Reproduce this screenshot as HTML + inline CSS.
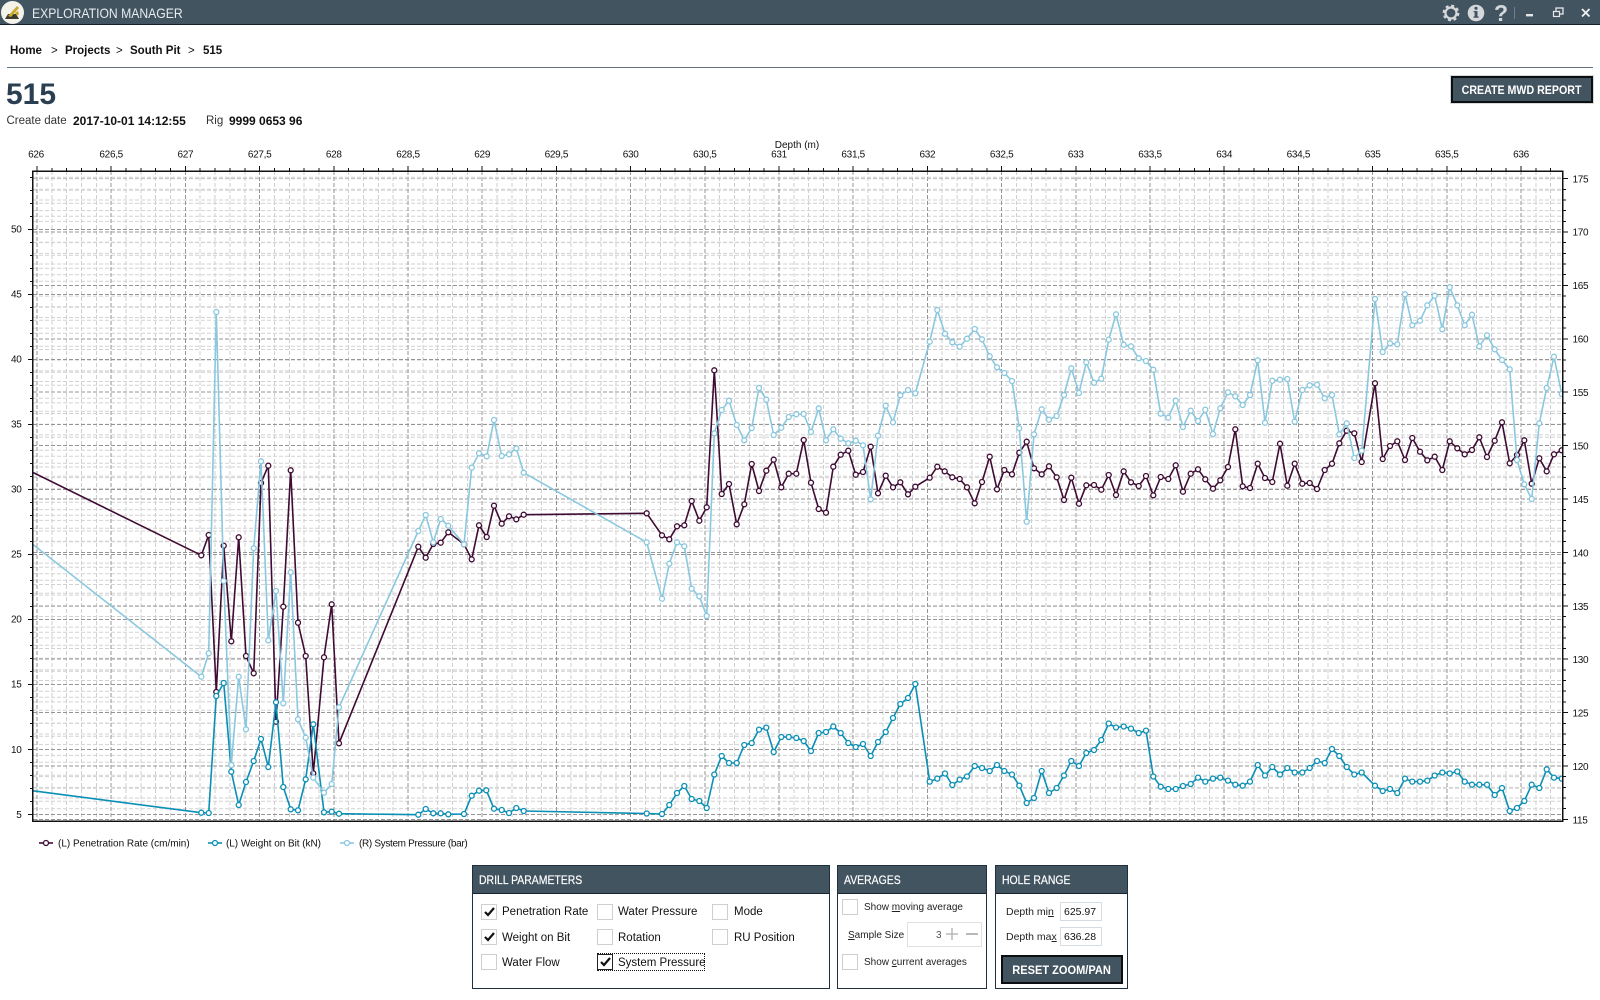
<!DOCTYPE html>
<html><head><meta charset="utf-8"><title>Exploration Manager</title>
<style>
html,body{margin:0;padding:0;background:#fff}
body{width:1600px;height:1000px;overflow:hidden;position:relative;font-family:"Liberation Sans",sans-serif;color:#111}
.t{position:absolute;white-space:nowrap}
.b{font-weight:bold}
.hdr{position:absolute;left:0;top:0;width:1600px;height:24px;background:#435461;border-bottom:1px solid #14232e}
.panel{position:absolute;top:865px;height:122px;border:1px solid #1c3040;background:#fff;box-sizing:content-box}
.ph{position:absolute;left:0;top:0;right:0;height:27px;background:#435461;border-bottom:1px solid #14232e;color:#fff;font-size:12px;line-height:29px;padding-left:6px;-webkit-text-stroke:.2px #fff}
.ph span{display:inline-block;transform:scaleX(.87);transform-origin:left center}
.cb{position:absolute;width:14px;height:14px;border:1px solid #cfcfcf;background:#fff}
.cb svg{position:absolute;left:1px;top:1px}
.lbl{position:absolute;white-space:nowrap;font-size:11.5px;line-height:16px;color:#111}
.sm{position:absolute;white-space:nowrap;font-size:10px;line-height:14px;color:#222}
.inp{position:absolute;border:1px solid #d5dce2;background:#fff;font-size:10.5px;line-height:16px;padding-left:3px;box-sizing:border-box;color:#111}
.btn{position:absolute;background:#435461;border:2px solid #0b0f12;color:#fff;font-weight:bold;font-size:12px;text-align:center;box-sizing:border-box;outline:1px solid #d8d8d8}
.btn span{display:inline-block}
svg text{font-family:"Liberation Sans",sans-serif;font-size:10px;letter-spacing:-.3px;fill:#111}
</style></head><body>

<div class="hdr"></div>
<svg style="position:absolute;left:0;top:0" width="26" height="25">
<circle cx="12.5" cy="12.5" r="11.5" fill="#f4f3ea"/>
<path d="M5 19l3-5h8l3 5z" fill="#3a3a30"/>
<path d="M8 16L17 6l2 2-8 9z" fill="#c9a92c"/>
<path d="M15 13l3-2 1 3-2 2z" fill="#c9a92c"/>
</svg>
<div class="t" style="left:32px;top:5px;font-size:14px;line-height:17px;color:#e6ebee;transform:scaleX(.87);transform-origin:left center">EXPLORATION MANAGER</div>

<svg style="position:absolute;left:1430px;top:0" width="170" height="25">
<circle cx="21" cy="13" r="5.5" fill="none" stroke="#d4d8da" stroke-width="2.2"/>
<circle cx="21" cy="13" r="7.300" fill="none" stroke="#d4d8da" stroke-width="2.200" stroke-dasharray="3 2.730"/>
<circle cx="46" cy="13" r="8.300" fill="#d4d8da"/>
<rect x="44.600" y="11" width="2.900" height="6.500" fill="#435461"/><rect x="43.600" y="16.400" width="5" height="1.400" fill="#435461"/><rect x="43.600" y="11" width="3" height="1.200" fill="#435461"/>
<circle cx="46" cy="8.300" r="1.600" fill="#435461"/>
<rect x="84" y="7" width="1" height="12" fill="#6f7f8a"/>
<rect x="96" y="14" width="7" height="2.400" fill="#e4e8ea"/>
<rect x="126" y="8" width="7" height="6" fill="none" stroke="#e4e8ea" stroke-width="1.300"/>
<rect x="123.500" y="11.500" width="6" height="5" fill="#435461" stroke="#e4e8ea" stroke-width="1.200"/>
<path d="M152 9l7.500 7.500M159.500 9l-7.500 7.500" stroke="#eef1f2" stroke-width="1.800"/>
</svg>
<div class="t b" style="left:1494px;top:0;font-size:23px;line-height:27px;color:#d4d8da">?</div>

<div class="t b" style="left:10px;top:44px;font-size:11.5px;line-height:14px">Home</div>
<div class="t" style="left:51px;top:44px;font-size:11.5px;line-height:14px">&gt;</div>
<div class="t b" style="left:65px;top:44px;font-size:11.5px;line-height:14px">Projects</div>
<div class="t" style="left:116px;top:44px;font-size:11.5px;line-height:14px">&gt;</div>
<div class="t b" style="left:130px;top:44px;font-size:11.5px;line-height:14px">South Pit</div>
<div class="t" style="left:188px;top:44px;font-size:11.5px;line-height:14px">&gt;</div>
<div class="t b" style="left:203px;top:44px;font-size:11.5px;line-height:14px">515</div>
<div style="position:absolute;left:7px;top:67px;width:1586px;height:1px;background:#66767f"></div>

<div class="t b" style="left:6px;top:78px;font-size:30px;line-height:34px;color:#2b3f52">515</div>
<div class="t" style="left:6.500px;top:114px;font-size:11.500px;line-height:14px;color:#333">Create date</div>
<div class="t b" style="left:73px;top:114px;font-size:12px;line-height:14px">2017-10-01 14:12:55</div>
<div class="t" style="left:206px;top:114px;font-size:11.500px;line-height:14px;color:#333">Rig</div>
<div class="t b" style="left:229px;top:114px;font-size:12px;line-height:14px">9999 0653 96</div>

<div class="btn" style="left:1451px;top:76px;width:142px;height:27px;line-height:25px"><span style="transform:scaleX(.887)">CREATE MWD REPORT</span></div>

<svg style="position:absolute;left:0;top:0" width="1600" height="860">
<defs>
<clipPath id="plot"><rect x="33" y="171" width="1530" height="650"/></clipPath>
<path id="vm" d="M14.84 171V821M29.68 171V821M44.52 171V821M59.36 171V821M89.04 171V821M103.880 171V821M118.720 171V821M133.560 171V821"/>
<path id="vM" d="M0 171V821M74.200 171V821"/>
<path id="tm" d="M14.84 168V171M29.68 168V171M44.52 168V171M59.36 168V171M89.04 168V171M103.880 168V171M118.720 168V171M133.560 168V171"/>
<path id="tM" d="M0 166V171M74.200 166V171"/>
<path id="hl" d="M33 -13H1563M33 -26H1563M33 -39H1563M33 -52H1563"/>
<path id="hr" d="M33 10.680H1563M33 21.360H1563M33 32.040H1563M33 42.720H1563"/>
<path id="tl" d="M30 -13H33M30 -26H33M30 -39H33M30 -52H33M28 0H33"/>
<path id="tr" d="M1563 10.680H1566M1563 21.360H1566M1563 32.040H1566M1563 42.720H1566M1563 0H1568"/>
<marker id="mP" markerUnits="userSpaceOnUse" markerWidth="8" markerHeight="8" refX="4" refY="4"><circle cx="4" cy="4" r="2.500" fill="#fff" stroke="#3f0b33" stroke-width="1.300"/></marker>
<marker id="mT" markerUnits="userSpaceOnUse" markerWidth="8" markerHeight="8" refX="4" refY="4"><circle cx="4" cy="4" r="2.500" fill="#fff" stroke="#0a8fb5" stroke-width="1.300"/></marker>
<marker id="mL" markerUnits="userSpaceOnUse" markerWidth="8" markerHeight="8" refX="4" refY="4"><circle cx="4" cy="4" r="2.500" fill="#fff" stroke="#8ac8df" stroke-width="1.300"/></marker>
</defs>

<g clip-path="url(#plot)" fill="none" stroke-width="1" stroke-dasharray="4 2">
<g stroke="#cfcfcf" shape-rendering="crispEdges">
<use href="#vm" x="37"/><use href="#vm" x="185.400"/><use href="#vm" x="333.800"/><use href="#vm" x="482.200"/><use href="#vm" x="630.600"/><use href="#vm" x="779"/><use href="#vm" x="927.400"/><use href="#vm" x="1075.800"/><use href="#vm" x="1224.200"/><use href="#vm" x="1372.600"/><use href="#vm" x="1521"/>
</g>
<g stroke="#d2d2d2">
<use href="#hl" y="814.300"/><use href="#hl" y="749.300"/><use href="#hl" y="684.300"/><use href="#hl" y="619.300"/><use href="#hl" y="554.300"/><use href="#hl" y="489.300"/><use href="#hl" y="424.300"/><use href="#hl" y="359.300"/><use href="#hl" y="294.300"/><use href="#hl" y="229.300"/>
<use href="#hr" y="178.600"/><use href="#hr" y="232"/><use href="#hr" y="285.400"/><use href="#hr" y="338.800"/><use href="#hr" y="392.200"/><use href="#hr" y="445.600"/><use href="#hr" y="499"/><use href="#hr" y="552.400"/><use href="#hr" y="605.800"/><use href="#hr" y="659.200"/><use href="#hr" y="712.600"/><use href="#hr" y="766"/>
</g>
<g stroke="#959595" shape-rendering="crispEdges">
<use href="#vM" x="37"/><use href="#vM" x="185.400"/><use href="#vM" x="333.800"/><use href="#vM" x="482.200"/><use href="#vM" x="630.600"/><use href="#vM" x="779"/><use href="#vM" x="927.400"/><use href="#vM" x="1075.800"/><use href="#vM" x="1224.200"/><use href="#vM" x="1372.600"/><use href="#vM" x="1521"/>
<path d="M33 814.300H1563M33 749.300H1563M33 684.300H1563M33 619.300H1563M33 554.300H1563M33 489.300H1563M33 424.300H1563M33 359.300H1563M33 294.300H1563M33 229.300H1563"/>
<path d="M33 232H1563M33 285.400H1563M33 338.800H1563M33 392.200H1563M33 445.600H1563M33 499H1563M33 552.400H1563M33 605.800H1563M33 659.200H1563M33 712.600H1563M33 766H1563M33 819.400H1563"/>
</g>
<path d="M33 178.600H1563" stroke="#bdbdbd"/>
</g>

<g shape-rendering="crispEdges" fill="none" stroke="#111" stroke-width="1">
<use href="#tm" x="37"/><use href="#tm" x="185.400"/><use href="#tm" x="333.800"/><use href="#tm" x="482.200"/><use href="#tm" x="630.600"/><use href="#tm" x="779"/><use href="#tm" x="927.400"/><use href="#tm" x="1075.800"/><use href="#tm" x="1224.200"/><use href="#tm" x="1372.600"/>
<path d="M1535.840 168V171M1550.680 168V171"/>
<use href="#tM" x="37"/><use href="#tM" x="185.400"/><use href="#tM" x="333.800"/><use href="#tM" x="482.200"/><use href="#tM" x="630.600"/><use href="#tM" x="779"/><use href="#tM" x="927.400"/><use href="#tM" x="1075.800"/><use href="#tM" x="1224.200"/><use href="#tM" x="1372.600"/>
<path d="M1521 166V171"/>
<use href="#tl" y="814.300"/><use href="#tl" y="749.300"/><use href="#tl" y="684.300"/><use href="#tl" y="619.300"/><use href="#tl" y="554.300"/><use href="#tl" y="489.300"/><use href="#tl" y="424.300"/><use href="#tl" y="359.300"/><use href="#tl" y="294.300"/><use href="#tl" y="229.300"/>
<use href="#tr" y="178.600"/><use href="#tr" y="232"/><use href="#tr" y="285.400"/><use href="#tr" y="338.800"/><use href="#tr" y="392.200"/><use href="#tr" y="445.600"/><use href="#tr" y="499"/><use href="#tr" y="552.400"/><use href="#tr" y="605.800"/><use href="#tr" y="659.200"/><use href="#tr" y="712.600"/><use href="#tr" y="766"/>
<path d="M1563 819.400H1568"/>
</g>

<g clip-path="url(#plot)" fill="none" stroke-width="1.600" stroke-linejoin="round">
<path d="M33 472.500L201.300 555.300" stroke="#3f0b33"/>
<path stroke="#3f0b33" marker-start="url(#mP)" marker-mid="url(#mP)" marker-end="url(#mP)" d="M201.300 555.300L208.700 535 216.300 692 223.700 545.700 231.300 641.300 238.700 537.300 246 656 253.700 673.300 261 483 268.300 465.700 276 721.700 283.300 606.700 290.700 470.300 298 622.700 305.700 656 313.300 773.300 324 657.300 331.700 604.300 339 743.300 418.300 546.700 425.700 557.700 433.300 544 440.700 542.700 448.300 532.300 464 544.300 471.700 559.300 479 525.300 486.700 537 494 505.700 501.700 523.700 509 516.300 516.300 519.300 523.700 514.700 646.700 513.300 662 535.300 669.300 539.300 677 526.300 684.300 525.300 691.700 501 699.300 520.700 706.700 507.300 714.300 370.300 721.700 494 729 484 736.700 524.300 744.300 504.300 751.700 464 759 491 766.300 470.700 773.700 459.700 781.300 487.300 788.700 473.700 796.300 473.700 803.700 440 811 482.700 818.700 509 826 512.700 833.300 466.700 840.700 454.700 848.300 450.700 855.700 474.700 863 472 870.700 446.700 878 493.300 885.700 475.700 893 487.300 900.300 482.300 908 494.300 915.300 486.700 929.700 477.700 937.300 466.700 944.700 471.300 952.300 477.300 959.700 479 967 487.300 974.700 503.300 982 482 989.700 456.700 997 489.300 1004.300 470 1012 474.300 1019.300 452.700 1026.700 441.700 1034 468.300 1041.700 474.300 1049 466.300 1056.700 477.300 1064 500 1071.300 477.700 1079 503.700 1086.300 485.300 1094 485 1101.300 489.700 1108.700 475 1116 495 1123.700 471.300 1131 482.300 1138.700 486 1146 476 1153.300 495.300 1160.700 477 1168.300 479 1175.700 465.300 1183 491.700 1190.700 473.700 1198 469.300 1205.300 479.300 1213 488.700 1220.300 480.300 1228 467 1235.300 429.300 1242.700 486.300 1250 488 1257.700 463.700 1265 478 1272.300 482 1280 443.700 1287.300 485.700 1294.700 463.700 1302.300 483.700 1309.700 483 1317 489 1324.700 470 1332 463.700 1339.300 443.300 1346.700 430.700 1354.300 433.300 1361.700 462 1375 383.300 1382.700 459 1390 446 1397.300 441.300 1405 460 1412.300 438 1420 451.700 1427.300 460.300 1434.700 456.700 1442.300 470 1449.700 441.300 1457.300 448.300 1464.700 454.300 1472 450 1479.300 437.300 1487 457 1494.700 440.700 1502 422.300 1509.700 463.300 1517 455 1524.300 440.300 1531.700 483.700 1539.300 458.300 1546.700 471.300 1554 454.300 1561.700 450.300"/>
<path d="M33 790.800L201.300 812.700" stroke="#0a8fb5"/>
<path stroke="#0a8fb5" marker-start="url(#mT)" marker-mid="url(#mT)" marker-end="url(#mT)" d="M201.300 812.700L208.700 813 216.300 696 223.700 683 231.300 771.700 238.700 805 246 782 253.700 761 261 739 268.300 767 276 702.300 283.300 787 290.700 809.300 298 810.300 305.700 779.300 313.300 724.300 324 812.300 331.700 811.700 339 813.700 418.300 814.700 425.700 809 433.300 813.300 440.700 813.300 448.300 814.300 464 814 471.700 795.700 479 790.700 486.300 790.300 494 808.700 501.700 810 509 813 516.300 808 523.700 811 646.700 813.500 662 814 669.300 805 677 793 684.300 786 691.700 799 699.300 801 706.700 808 714.300 774.500 721.700 756 729 763 736.700 763 744.300 745 751.700 743 759 729.600 766.300 727.600 773.700 752 781.300 737 788.700 737 796.300 738 803.700 741 811 751 818.700 733 826 732 833.300 726.500 840.700 733 848.300 743 855.700 747 863 744 870.700 756 878 742 885.700 732 893 718 900.300 704 908 698 915.300 684 929.700 781.600 937.300 778.600 945 773.500 952.300 785 959.700 779.600 967 776.500 974.700 766 982 768 989.700 771 997 765 1004.300 771 1012 774.500 1019.300 785.600 1026.700 803 1034 798 1041.700 771 1049 793 1056.700 788 1064 775.500 1071.300 761 1079 766 1086.300 753 1094 750 1101.300 740 1108.700 723.500 1116 727.500 1123.700 726.500 1131 728.600 1138.700 733 1146 730.600 1153.300 776.500 1160.700 786.700 1168.300 789 1175.700 789 1183 786 1190.700 784 1198 777.600 1205.300 781.600 1213 778.600 1220.300 777.600 1228 780.600 1235.300 784.700 1242.700 785.700 1250 781.600 1257.700 765 1265 775.500 1272.300 767 1280 774.500 1287.300 768 1294.700 772.500 1302.300 772.500 1309.700 768 1317 761 1324.700 763 1332 749 1339.300 756 1346.700 767 1354.300 774.500 1361.700 772.500 1375 785.700 1382.700 791 1390 789 1397.300 793 1405 778.600 1412.300 781.600 1420 781.600 1427.300 780.600 1434.700 775.500 1442.300 772.500 1449.700 773.500 1457.300 771.500 1464.700 781.600 1472 784.700 1479.300 784.700 1487 784.700 1494.700 795 1502 788 1509.700 811 1517 808 1524.300 801 1531.700 784.700 1539.300 788 1546.700 769.400 1554 777.600 1561.700 778.600"/>
<path d="M33 544.500L201.300 676.700" stroke="#8ac8df"/>
<path stroke="#8ac8df" marker-start="url(#mL)" marker-mid="url(#mL)" marker-end="url(#mL)" d="M201.300 676.700L208.700 653.300 216.300 312 223.700 581 231.300 765 238.700 676.700 246 729.300 253.700 548.300 261 461.300 268.300 640.300 276 591 283.300 703.300 290.700 572.300 298 719.300 305.700 737.700 313.300 777.700 324 792.700 331.700 784 339 707.300 418.300 531 425.700 515 433.300 542.300 440.700 519 448.300 525.700 464 544.300 471.700 467.700 479 453.300 486.700 456.300 494 420 501.700 456 509 454.300 516.300 448.300 523.700 472.700 646.700 542.300 662 598.700 669.300 563.700 677 542.300 684.300 546.300 691.700 588.700 699.300 596.300 706.700 616 714.300 433.300 721.700 410 729 400.700 736.700 425 744.300 440.300 751.700 428 759 388 766.300 399.700 773.700 435 781.300 427.700 788.700 417 796.300 414.300 803.700 414 811 432 818.700 408.300 826 440.300 833.300 429.300 840.700 438.700 848.300 443.300 855.700 440.700 863 445.300 870.700 499.300 878 435.700 885.700 405.700 893 422.300 900.300 395.300 908 390 915.300 393.300 929.700 341.700 937.300 310 945 333.700 952.300 342.300 959.700 346.700 967 338.700 974.700 329 982 339.300 989.700 356.300 997 367.300 1004.300 373 1012 381 1019.300 428.300 1026.700 521.700 1034 434.300 1041.700 409.300 1049 419.700 1056.700 416 1064 395 1071.300 368.300 1079 393 1086.300 362.300 1094 382.700 1101.300 378.700 1108.700 339.700 1116 314.300 1123.700 344.700 1131 346.300 1138.700 358.300 1146 361 1153.300 369.700 1160.700 413.700 1168.300 417.700 1175.700 400.700 1183 427 1190.700 410.700 1198 421 1205.300 409.700 1213 434 1220.300 408.300 1228 392.300 1235.300 396.300 1242.700 405 1250 395 1257.700 360.300 1265 422.700 1272.300 380.700 1280 379.700 1287.300 379 1294.700 421.700 1302.300 390 1309.700 385.300 1317 384.700 1324.700 398.300 1332 395 1339.300 434.300 1346.700 423.300 1354.300 458 1361.700 450.700 1375 299 1382.700 352 1390 343.300 1397.300 344.300 1405 294.300 1412.300 325.300 1420 320.700 1427.300 305.300 1434.700 295.700 1442.300 329.300 1449.700 287.300 1457.300 305.300 1464.700 325.300 1472 314.700 1479.300 346.300 1487 335.300 1494.700 349.300 1502 360 1509.700 369.300 1517 460 1524.300 484.300 1531.700 499 1539.300 423.300 1546.700 388 1554 356.700 1561.700 394"/>
</g>

<rect x="32.750" y="171.250" width="1530" height="650" fill="none" stroke="#111" stroke-width="1.500"/>

<g text-anchor="middle">
<text x="797" y="148" style="letter-spacing:0">Depth (m)</text>
<text x="36" y="157.500">626</text><text x="111.200" y="157.500">626,5</text><text x="185.400" y="157.500">627</text><text x="259.600" y="157.500">627,5</text><text x="333.800" y="157.500">628</text><text x="408" y="157.500">628,5</text><text x="482.200" y="157.500">629</text><text x="556.400" y="157.500">629,5</text><text x="630.600" y="157.500">630</text><text x="704.800" y="157.500">630,5</text><text x="779" y="157.500">631</text><text x="853.200" y="157.500">631,5</text><text x="927.400" y="157.500">632</text><text x="1001.600" y="157.500">632,5</text><text x="1075.800" y="157.500">633</text><text x="1150" y="157.500">633,5</text><text x="1224.200" y="157.500">634</text><text x="1298.400" y="157.500">634,5</text><text x="1372.600" y="157.500">635</text><text x="1446.800" y="157.500">635,5</text><text x="1521" y="157.500">636</text>
</g>
<g text-anchor="end">
<text x="21.500" y="818">5</text><text x="21.500" y="753">10</text><text x="21.500" y="687.500">15</text><text x="21.500" y="622.500">20</text><text x="21.500" y="557.500">25</text><text x="21.500" y="492.500">30</text><text x="21.500" y="427.500">35</text><text x="21.500" y="362.500">40</text><text x="21.500" y="297.500">45</text><text x="21.500" y="232.500">50</text>
</g>
<g>
<text x="1572.500" y="182.500">175</text><text x="1572.500" y="235.500">170</text><text x="1572.500" y="289">165</text><text x="1572.500" y="342.500">160</text><text x="1572.500" y="396">155</text><text x="1572.500" y="449.500">150</text><text x="1572.500" y="503">145</text><text x="1572.500" y="556.500">140</text><text x="1572.500" y="610">135</text><text x="1572.500" y="663">130</text><text x="1572.500" y="716.500">125</text><text x="1572.500" y="770">120</text><text x="1572.500" y="823.500">115</text>
</g>

<path d="M39 843H53" stroke="#3f0b33" stroke-width="1.600"/><circle cx="46" cy="843" r="2.500" fill="#fff" stroke="#3f0b33" stroke-width="1.300"/>
<path d="M208 843H222" stroke="#0a8fb5" stroke-width="1.600"/><circle cx="215" cy="843" r="2.500" fill="#fff" stroke="#0a8fb5" stroke-width="1.300"/>
<path d="M340 843H354" stroke="#8ac8df" stroke-width="1.600"/><circle cx="347" cy="843" r="2.500" fill="#fff" stroke="#8ac8df" stroke-width="1.300"/>
<text x="58" y="846.500" textLength="131.700" style="letter-spacing:0">(L) Penetration Rate (cm/min)</text>
<text x="226" y="846.500" textLength="95" style="letter-spacing:0">(L) Weight on Bit (kN)</text>
<text x="359" y="846.500" textLength="108.700" style="letter-spacing:0">(R) System Pressure (bar)</text>
</svg>

<!-- Drill parameters -->
<div class="panel" style="left:472px;width:356px">
<div class="ph"><span>DRILL PARAMETERS</span></div>
<div class="cb" style="left:8px;top:38px"><svg width="12" height="12"><path d="M2 6l3 3 6-7" fill="none" stroke="#111" stroke-width="2.200"/></svg></div>
<div class="lbl" style="left:29px;top:38px">Penetration Rate</div>
<div class="cb" style="left:123.500px;top:38px"></div>
<div class="lbl" style="left:145px;top:38px">Water Pressure</div>
<div class="cb" style="left:239px;top:38px"></div>
<div class="lbl" style="left:261px;top:38px">Mode</div>
<div class="cb" style="left:8px;top:63px"><svg width="12" height="12"><path d="M2 6l3 3 6-7" fill="none" stroke="#111" stroke-width="2.200"/></svg></div>
<div class="lbl" style="left:29px;top:64px">Weight on Bit</div>
<div class="cb" style="left:123.500px;top:63px"></div>
<div class="lbl" style="left:145px;top:64px">Rotation</div>
<div class="cb" style="left:239px;top:63px"></div>
<div class="lbl" style="left:261px;top:64px">RU Position</div>
<div class="cb" style="left:8px;top:88px"></div>
<div class="lbl" style="left:29px;top:89px">Water Flow</div>
<div style="position:absolute;left:124px;top:87px;width:106px;height:16px;border:1px dotted #111"></div>
<div class="cb" style="left:124px;top:88px;border-color:#222"><svg width="12" height="12"><path d="M2 6l3 3 6-7" fill="none" stroke="#111" stroke-width="2.200"/></svg></div>
<div class="lbl" style="left:145px;top:89px">System Pressure</div>
</div>

<!-- Averages -->
<div class="panel" style="left:837px;width:148px">
<div class="ph"><span>AVERAGES</span></div>
<div class="cb" style="left:4px;top:33px"></div>
<div class="sm" style="left:26px;top:35px">Show <u>m</u>oving average</div>
<div class="sm" style="left:10px;top:63px"><u>S</u>ample Size</div>
<div class="inp" style="left:69px;top:56px;width:75px;height:25px;border-color:#e0e0e0"></div>
<div class="sm" style="left:98px;top:63px;color:#555">3</div>
<svg style="position:absolute;left:106px;top:60px" width="40" height="16"><path d="M8 2V14M2 8H14" stroke="#b8b8b8" stroke-width="1.500" fill="none"/><path d="M22 8H34" stroke="#b8b8b8" stroke-width="2" fill="none"/></svg>
<div class="cb" style="left:4px;top:88px"></div>
<div class="sm" style="left:26px;top:90px">Show <u>c</u>urrent averages</div>
</div>

<!-- Hole range -->
<div class="panel" style="left:995px;width:131px">
<div class="ph"><span>HOLE RANGE</span></div>
<div class="sm" style="left:10px;top:39px;font-size:10.5px">Depth mi<u>n</u></div>
<div class="inp" style="left:64px;top:36px;width:42px;height:19px;line-height:18px">625.97</div>
<div class="sm" style="left:10px;top:64px;font-size:10.5px">Depth ma<u>x</u></div>
<div class="inp" style="left:64px;top:61px;width:42px;height:19px;line-height:18px">636.28</div>
<div class="btn" style="left:5px;top:89px;width:122px;height:29px;line-height:27px;outline:none"><span style="transform:scaleX(.92)">RESET ZOOM/PAN</span></div>
</div>

</body></html>
